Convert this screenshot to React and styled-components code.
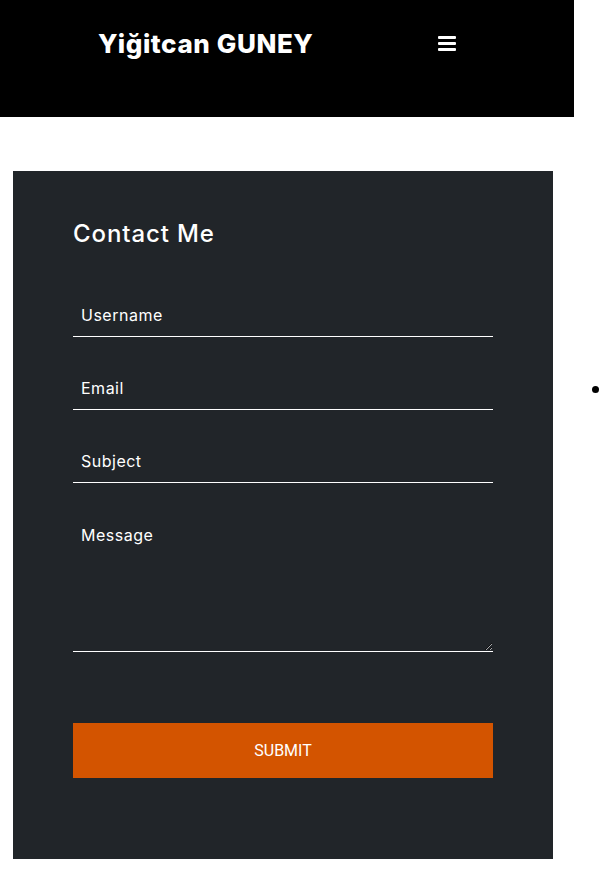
import React from "react";
import styled, { createGlobalStyle } from "styled-components";

const Global = createGlobalStyle`
  html, body { margin: 0; padding: 0; background: #fff; }
  body { font-family: Inter, "Open Sans", sans-serif; overflow-x: hidden; }
  * { box-sizing: border-box; }
`;

const Header = styled.header`
  width: 574px;
  height: 117px;
  background: #000;
  display: flex;
  align-items: flex-start;
  padding: 25px 0 0 98px;
`;

const Logo = styled.div`
  color: #fff;
  font-family: Inter, sans-serif;
  font-weight: 800;
  font-size: 26px;
  line-height: 38px;
  letter-spacing: 0.6px;
  width: 340px;
`;

const Burger = styled.button`
  background: none;
  border: none;
  padding: 0;
  margin-top: 11px;
  display: flex;
  flex-direction: column;
  gap: 3px;
  width: 18px;
  cursor: pointer;
`;

const Bar = styled.span`
  display: block;
  height: 3px;
  width: 18px;
  background: #fff;
  border-radius: 1px;
`;

const Main = styled.main`
  display: flex;
  align-items: flex-start;
  padding: 54px 0 30px 13px;
`;

const Card = styled.section`
  flex-shrink: 0;
  width: 540px;
  background: #212529;
  padding: 45px 60px 81px;
`;

const Title = styled.h2`
  margin: 0 0 42px;
  color: #fff;
  font-family: Inter, sans-serif;
  font-weight: 500;
  font-size: 24px;
  line-height: 36px;
  letter-spacing: 0.9px;
`;

const Form = styled.form`
  display: flex;
  flex-direction: column;
`;

const fieldStyles = `
  width: 100%;
  background: transparent;
  border: none;
  border-bottom: 1px solid #fff;
  color: #fff;
  font-family: Inter, sans-serif;
  font-size: 16px;
  letter-spacing: 0.5px;
  outline: none;
  padding: 0 8px;
  &::placeholder { color: #fff; opacity: 1; }
`;

const Input = styled.input`
  ${fieldStyles}
  height: 43px;
  margin-bottom: 30px;
`;

const TextArea = styled.textarea`
  ${fieldStyles}
  height: 139px;
  padding-top: 12px;
  line-height: 20px;
  margin-bottom: 71px;
  resize: vertical;
  display: block;
`;

const Submit = styled.button`
  height: 55px;
  width: 100%;
  background: #d35400;
  border: none;
  color: #fff;
  font-family: Roboto, sans-serif;
  font-size: 16px;
  cursor: pointer;
`;

const Side = styled.ul`
  flex-shrink: 0;
  margin: 0;
  padding: 215px 0 0 39px;
  list-style: none;
`;

const Dot = styled.li`
  width: 7px;
  height: 7px;
  border-radius: 50%;
  background: #000;
`;

export default function App() {
  return (
    <>
      <Global />
      <Header>
        <Logo>Yiğitcan GUNEY</Logo>
        <Burger aria-label="menu">
          <Bar />
          <Bar />
          <Bar />
        </Burger>
      </Header>
      <Main>
        <Card>
          <Title>Contact Me</Title>
          <Form onSubmit={(e) => e.preventDefault()}>
            <Input placeholder="Username" />
            <Input placeholder="Email" />
            <Input placeholder="Subject" />
            <TextArea placeholder="Message" />
            <Submit type="submit">SUBMIT</Submit>
          </Form>
        </Card>
        <Side>
          <Dot />
        </Side>
      </Main>
    </>
  );
}
